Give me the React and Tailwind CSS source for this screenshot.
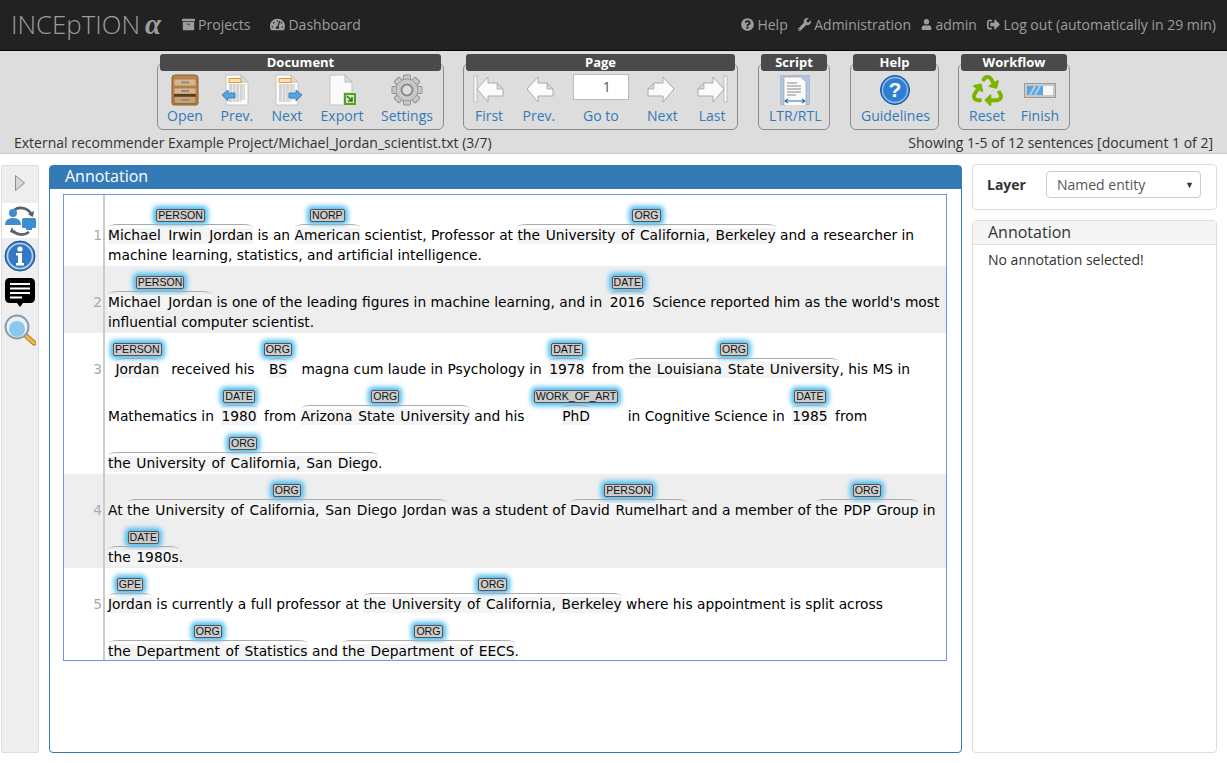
import { FaArchive, FaTachometerAlt, FaQuestionCircle, FaWrench, FaUser, FaSignOutAlt, FaRecycle } from "react-icons/fa";

const sentences = [
  {
    n: 1,
    lines: [
      [{ t: "Michael Irwin Jordan", l: "PERSON", wide: true }, " is an ", { t: "American", l: "NORP" }, " scientist, Professor at ", { t: "the University of California, Berkeley", l: "ORG" }, " and a researcher in"],
      ["machine learning, statistics, and artificial intelligence."],
    ],
  },
  {
    n: 2,
    lines: [
      [{ t: "Michael Jordan", l: "PERSON", wide: true }, " is one of the leading figures in machine learning, and in ", { t: "2016", l: "DATE" }, " Science reported him as the world's most"],
      ["influential computer scientist."],
    ],
  },
  {
    n: 3,
    lines: [
      [{ t: "Jordan", l: "PERSON" }, " received his ", { t: "BS", l: "ORG" }, " magna cum laude in Psychology in ", { t: "1978", l: "DATE" }, " from ", { t: "the Louisiana State University", l: "ORG" }, ", his MS in"],
      ["Mathematics in ", { t: "1980", l: "DATE" }, " from ", { t: "Arizona State University", l: "ORG" }, " and his ", { t: "PhD", l: "WORK_OF_ART" }, " in Cognitive Science in ", { t: "1985", l: "DATE" }, " from"],
      [{ t: "the University of California, San Diego", l: "ORG" }, "."],
    ],
  },
  {
    n: 4,
    lines: [
      ["At ", { t: "the University of California, San Diego Jordan", l: "ORG" }, " was a student of ", { t: "David Rumelhart", l: "PERSON" }, " and a member of ", { t: "the PDP Group", l: "ORG" }, " in"],
      [{ t: "the 1980s", l: "DATE" }, "."],
    ],
  },
  {
    n: 5,
    lines: [
      [{ t: "Jordan", l: "GPE" }, " is currently a full professor at ", { t: "the University of California, Berkeley", l: "ORG" }, " where his appointment is split across"],
      [{ t: "the Department of Statistics", l: "ORG" }, " and ", { t: "the Department of EECS", l: "ORG" }, "."],
    ],
  },
];

function Page({ children }) {
  return (
    <>
      <path d="M5 1h15l7 7v23H5z" fill="#fdfdfd" stroke="#c4c4c4" />
      <path d="M20 1v7h7z" fill="#ddd" stroke="#bbb" />
      {children}
    </>
  );
}

function DocLines() {
  return (
    <>
      <rect x="8" y="4.5" width="12" height="4" fill="#fbe3c0" stroke="#ef9a2b" />
      <path d="M8 11h16M8 13h16M8 15h16M8 17h16M8 19h16M8 21h16M8 23h16M8 25h16M8 27h12" stroke="#aaa" strokeDasharray="3 .6" />
    </>
  );
}

function BlueArrow({ dir }) {
  const d = dir === "left" ? "M1 21l6-5v3h7v5H7v3z" : "M31 21l-6-5v3h-7v5h7v3z";
  return <path d={d} fill="#5ba3dd" stroke="#2f77b5" strokeWidth=".8" />;
}

function OpenIcon() {
  return (
    <svg width="32" height="32" viewBox="0 0 32 32">
      <path d="M3 4q0-3 3-3h20q3 0 3 3v25q0 2-2 2H5q-2 0-2-2z" fill="#b98651" stroke="#8a5c2c" />
      <rect x="5" y="5" width="22" height="7" fill="#d6b48c" stroke="#9b7241" strokeWidth=".6" />
      <rect x="5" y="14" width="22" height="6" fill="#d6b48c" stroke="#9b7241" strokeWidth=".6" />
      <rect x="5" y="22.5" width="22" height="7" fill="#c9a073" stroke="#7b5426" strokeWidth=".6" />
      <rect x="5" y="20" width="22" height="2.5" fill="#5b3c18" />
      <rect x="12" y="7.5" width="8" height="2" fill="#8c8c8c" />
      <rect x="12" y="16" width="8" height="2" fill="#8c8c8c" />
      <rect x="12" y="25" width="8" height="2" fill="#8c8c8c" />
    </svg>
  );
}

function PrevDocIcon() {
  return (
    <svg width="32" height="32" viewBox="0 0 32 32">
      <Page><DocLines /></Page>
      <BlueArrow dir="left" />
    </svg>
  );
}

function NextDocIcon() {
  return (
    <svg width="32" height="32" viewBox="0 0 32 32">
      <Page><DocLines /></Page>
      <BlueArrow dir="right" />
    </svg>
  );
}

function ExportIcon() {
  return (
    <svg width="32" height="32" viewBox="0 0 32 32">
      <path d="M4 1h15l7 7v23H4z" fill="#fafafa" stroke="#c4c4c4" />
      <path d="M19 1v7h7z" fill="#ddd" stroke="#bbb" />
      <rect x="17.5" y="18.5" width="13" height="13" fill="#5c9b2e" stroke="#d8e8c8" />
      <rect x="20" y="21" width="8" height="8" fill="#d5e8bd" />
      <path d="M21 22l5 5m0-4v4h-4" stroke="#3a7a12" strokeWidth="1.6" fill="none" />
    </svg>
  );
}

function GearIcon() {
  const teeth = [0, 45, 90, 135, 180, 225, 270, 315];
  return (
    <svg width="32" height="32" viewBox="0 0 32 32">
      {teeth.map((a) => (
        <rect key={a} x="12.5" y="1" width="7" height="8" rx="1" fill="#c9c9c9" stroke="#8f8f8f" transform={`rotate(${a} 16 16)`} />
      ))}
      <circle cx="16" cy="16" r="11" fill="#c9c9c9" stroke="#9a9a9a" />
      <circle cx="16" cy="16" r="5.5" fill="#ddd" stroke="#8a8a8a" strokeWidth="2" />
    </svg>
  );
}

function PageArrow({ dir, bar }) {
  const flip = dir === "right" ? "scale(-1 1) translate(-32 0)" : undefined;
  return (
    <svg width="32" height="32" viewBox="0 0 32 32" className="-mt-[2px]">
      <g transform={flip}>
        {bar && <rect x="1" y="3" width="3" height="26" fill="#fafafa" stroke="#aaa" strokeWidth=".7" />}
        <path d="M4 16L15 4v6h9l6 6v7H15v6z" fill="#fbfbfb" stroke="#aaa" />
        <path d="M24 10v6h6z" fill="#d8d8d8" stroke="#999" strokeWidth=".6" />
      </g>
    </svg>
  );
}

function ScriptIcon() {
  return (
    <svg width="32" height="32" viewBox="0 0 32 32">
      <rect x="1.5" y="1.5" width="29" height="29" fill="#a9c9e6" stroke="#bbb" />
      <path d="M5 3h17l5 5v24H5z" fill="#fafafa" stroke="#999" strokeWidth=".6" />
      <path d="M8 9h10M8 12h14M8 15h14M8 18h14M8 21h9" stroke="#888" strokeWidth="1" />
      <path d="M6 27h20M9 25l-3 2 3 2M23 25l3 2-3 2" stroke="#2a6fb0" strokeWidth="1.1" fill="none" />
    </svg>
  );
}

function HelpIcon() {
  return (
    <svg width="32" height="32" viewBox="0 0 32 32">
      <circle cx="16" cy="16" r="14.5" fill="#2f7fd0" stroke="#15508f" />
      <circle cx="16" cy="16" r="12.5" fill="none" stroke="#8dbdec" strokeWidth="1.4" />
      <text x="16" y="23" textAnchor="middle" fontSize="21" fontWeight="700" fill="#fff" fontFamily="'Liberation Sans', sans-serif">?</text>
    </svg>
  );
}

function FinishIcon() {
  return (
    <svg width="32" height="32" viewBox="0 0 32 32">
      <rect x="0.5" y="9.5" width="31" height="14" fill="#c8c8c8" stroke="#9c9c9c" />
      <rect x="3" y="12" width="26" height="9" fill="#f6f6f6" />
      <rect x="3" y="12" width="16" height="9" fill="#5ba3dd" />
      <path d="M6 21l5-9M11 21l5-9" stroke="#a9d3f2" strokeWidth="2" />
    </svg>
  );
}

function SyncIcon() {
  return (
    <svg width="32" height="32" viewBox="0 0 32 32">
      <path d="M10 5a12 12 0 0 1 18 6" fill="none" stroke="#56616b" strokeWidth="2.6" />
      <path d="M24 9l5 3 1-6z" fill="#56616b" />
      <path d="M9 26a12 12 0 0 0 16 1" fill="none" stroke="#56616b" strokeWidth="2.6" />
      <path d="M11 29l-5-2 2-5z" fill="#56616b" />
      <circle cx="9" cy="8" r="4" fill="#3d8dd0" />
      <path d="M1 20q0-7 8-7t8 7z" fill="#3d8dd0" />
      <rect x="18" y="13" width="14" height="10" rx="1.5" fill="#3d8dd0" />
      <rect x="22" y="23" width="6" height="2" fill="#3d8dd0" />
    </svg>
  );
}

function InfoIcon() {
  return (
    <svg width="32" height="32" viewBox="0 0 32 32">
      <circle cx="16" cy="16" r="15" fill="#3579c4" stroke="#1b5796" />
      <circle cx="16" cy="16" r="12.5" fill="none" stroke="#b6d3f0" strokeWidth="1.6" />
      <circle cx="16" cy="9" r="2.6" fill="#fff" />
      <path d="M12 13h6v10h2v2.5h-8V23h2v-7.5h-2z" fill="#fff" />
    </svg>
  );
}

function CommentIcon() {
  return (
    <svg width="32" height="32" viewBox="0 0 32 32">
      <path d="M6 1h20q5 0 5 5v15q0 5-5 5h-7l-3 4-3-4H6q-5 0-5-5V6q0-5 5-5z" fill="#000" />
      <path d="M6 7h20M6 11.5h20M6 16h20M6 20.5h12" stroke="#fff" strokeWidth="2" />
    </svg>
  );
}

function SearchIcon() {
  return (
    <svg width="32" height="32" viewBox="0 0 32 32">
      <path d="M20 20l10 9" stroke="#8a6a2a" strokeWidth="5" strokeLinecap="round" />
      <path d="M21 21l9 8" stroke="#f4b63f" strokeWidth="3.4" strokeLinecap="round" />
      <circle cx="13" cy="13" r="11.5" fill="#e4f2fb" stroke="#8f9aa3" strokeWidth="2" />
      <circle cx="13" cy="15" r="8" fill="#8cc8ee" />
    </svg>
  );
}

function NavItem({ icon, children }) {
  return (
    <span className="flex items-center gap-[3px]">
      {icon}
      {children}
    </span>
  );
}

function ToolButton({ icon, label }) {
  return (
    <div className="flex flex-col items-center">
      <div className="flex h-[32px] items-center justify-center">{icon}</div>
      <span className="text-[14px] leading-[20px] text-[#337ab7]">{label}</span>
    </div>
  );
}

function ToolGroup({ title, className, pad = "px-[10px]", children }) {
  return (
    <div className={`flex flex-col ${className}`}>
      <div className="relative z-10 mx-[3px] h-[17px] rounded-[3px] bg-[#4a4a4a] text-center text-[13px] font-bold leading-[17px] text-white">{title}</div>
      <div className={`-mt-[8px] flex h-[67px] items-start justify-between rounded-[6px] border border-[#8c8c8c] pt-[10px] ${pad}`}>{children}</div>
    </div>
  );
}

function Annotated({ text, label, wide }) {
  return (
    <span className="flex flex-col items-center">
      <span className="mx-[5px] mb-[2px] block h-[13px] whitespace-nowrap rounded-[2px] border border-[#555] bg-[#ccc] px-px font-['Liberation_Sans',sans-serif] text-[10.6px] leading-[11px] text-[#111] shadow-[0_0_5px_3px_#4cbcf2]">
        {label}
      </span>
      <span className="block w-fit">
        <span className="relative block h-[4px] rounded-t-[10px_3px] border-t border-t-[#aaa]">
          <span className="absolute -top-[2px] left-1/2 block h-[2px] w-px bg-[#aaa]" />
        </span>
        <span className={wide ? "mb-[2px] block h-[16px] whitespace-pre bg-[#f4f4f4] leading-[14px] [word-spacing:3px]" : "mb-[2px] block h-[16px] whitespace-pre bg-[#f4f4f4] leading-[14px] [word-spacing:1.3px]"}>{text}</span>
      </span>
    </span>
  );
}

function Line({ segs }) {
  const annotated = segs.some((s) => typeof s !== "string");
  return (
    <div className={annotated ? "flex h-[47px] items-end" : "flex h-[20px] items-end"}>
      {segs.map((s, i) =>
        typeof s === "string" ? (
          <span key={i} className="h-[20px] whitespace-pre leading-[18px]">{s}</span>
        ) : (
          <Annotated key={i} text={s.t} label={s.l} wide={s.wide} />
        )
      )}
    </div>
  );
}

export default function App() {
  return (
    <div className="flex h-screen flex-col overflow-hidden bg-white font-['Open_Sans',sans-serif] text-[14px] text-[#333]">
      {/* Navbar */}
      <div className="flex h-[51px] items-center justify-between border-b border-[#080808] bg-[#222] pb-[2px] pl-[11px] pr-[11px] text-[#9d9d9d]">
        <div className="flex items-center">
          <span className="text-[25.8px] font-light leading-[48px]">INCEpTION</span>
          <span className="ml-[5px] font-['Liberation_Serif',serif] text-[29px] font-bold italic leading-[48px]">α</span>
          <div className="ml-[21px] flex items-center gap-[20px]">
            <NavItem icon={<FaArchive size={13} />}>Projects</NavItem>
            <NavItem icon={<FaTachometerAlt size={15} />}>Dashboard</NavItem>
          </div>
        </div>
        <div className="flex items-center gap-[10.5px]">
          <NavItem icon={<FaQuestionCircle size={13} />}>Help</NavItem>
          <NavItem icon={<FaWrench size={13} />}>Administration</NavItem>
          <NavItem icon={<FaUser size={11} />}>admin</NavItem>
          <NavItem icon={<FaSignOutAlt size={13} />}>Log out (automatically in 29 min)</NavItem>
        </div>
      </div>

      {/* Toolbar */}
      <div className="h-[103px] border-b border-[#ccc] bg-[#ddd] pt-[3px]">
        <div className="flex justify-center gap-[19px]">
          <ToolGroup title="Document" className="w-[287px]" pad="pl-[9px] pr-[10px]">
            <ToolButton icon={<OpenIcon />} label="Open" />
            <ToolButton icon={<PrevDocIcon />} label="Prev." />
            <ToolButton icon={<NextDocIcon />} label="Next" />
            <ToolButton icon={<ExportIcon />} label="Export" />
            <ToolButton icon={<GearIcon />} label="Settings" />
          </ToolGroup>
          <ToolGroup title="Page" className="w-[275px]" pad="px-[9px]">
            <ToolButton icon={<PageArrow dir="left" bar />} label="First" />
            <ToolButton icon={<PageArrow dir="left" />} label="Prev." />
            <ToolButton
              icon={<div className="h-[26px] w-[56px] self-start border border-[#bbb] bg-white pr-[17px] text-right leading-[24px] text-[#555]">1</div>}
              label="Go to"
            />
            <ToolButton icon={<PageArrow dir="right" />} label="Next" />
            <ToolButton icon={<PageArrow dir="right" bar />} label="Last" />
          </ToolGroup>
          <ToolGroup title="Script" className="mx-px w-[72px]">
            <ToolButton icon={<ScriptIcon />} label="LTR/RTL" />
          </ToolGroup>
          <ToolGroup title="Help" className="w-[89px]">
            <ToolButton icon={<HelpIcon />} label="Guidelines" />
          </ToolGroup>
          <ToolGroup title="Workflow" className="w-[112px]">
            <ToolButton icon={<FaRecycle size={31} color="#7db300" />} label="Reset" />
            <ToolButton icon={<FinishIcon />} label="Finish" />
          </ToolGroup>
        </div>
        <div className="mt-[3px] flex justify-between px-[14px] leading-[20px]">
          <span>External recommender Example Project/Michael_Jordan_scientist.txt (3/7)</span>
          <span>Showing 1-5 of 12 sentences [document 1 of 2]</span>
        </div>
      </div>

      {/* Main area */}
      <div className="flex min-h-0 flex-1 pb-[10px] pl-px pr-[10px] pt-[11px]">
        {/* Side actions */}
        <div className="flex w-[38px] shrink-0 flex-col items-center rounded-[2px] border border-[#ddd] bg-[#eee]">
          <div className="flex h-[37px] items-center justify-center pb-[3px]">
            <svg width="12" height="18" viewBox="0 0 12 18">
              <path d="M1.5 1.5v15L10.5 9z" fill="#d8d8d8" stroke="#8e8e8e" />
            </svg>
          </div>
          <div className="flex h-[35px] w-full items-center justify-center bg-white"><SyncIcon /></div>
          <div className="flex h-[35px] items-center justify-center"><InfoIcon /></div>
          <div className="flex h-[39px] items-center justify-center pt-px"><CommentIcon /></div>
          <div className="flex h-[35px] items-center justify-center"><SearchIcon /></div>
        </div>

        {/* Annotation editor */}
        <div className="ml-[10px] flex w-[913px] shrink-0 flex-col rounded-[4px] border border-[#337ab7]">
          <div className="h-[23px] bg-[#337ab7] pl-[15px] text-[16px] leading-[20px] text-white">Annotation</div>
          <div className="ml-[13px] mr-[14px] mt-[5px] h-[467px] overflow-hidden border border-[#6d94ee] font-['DejaVu_Sans',sans-serif] text-[13.8px] text-black">
            {sentences.map((s, i) => (
              <div key={s.n} className={i % 2 === 0 ? "flex bg-white" : "flex bg-[#eee]"}>
                <div className={i === 0 ? "relative w-[41px] shrink-0 border-r-2 border-[#ccc] pt-[4px]" : "relative w-[41px] shrink-0 border-r-2 border-[#ccc]"}>
                  <div className="mt-[27px] pr-px text-right leading-[18px] text-[#aaa]">{s.n}</div>
                </div>
                <div className={i === 0 ? "pl-[3px] pt-[4px]" : "pl-[3px]"}>
                  {s.lines.map((segs, j) => (
                    <Line key={j} segs={segs} />
                  ))}
                </div>
              </div>
            ))}
          </div>
        </div>

        {/* Right sidebar */}
        <div className="ml-[10px] flex w-[245px] shrink-0 flex-col">
          <div className="-mt-px flex h-[46px] items-start rounded-[4px] border border-[#ddd] pl-[14px] pr-[15px] pt-[6px]">
            <span className="font-bold leading-[27px]">Layer</span>
            <div className="ml-[20px] flex h-[27px] flex-1 items-center justify-between rounded-[4px] border border-[#ccc] bg-white pl-[10px] pr-[6px] text-[#555]">
              <span>Named entity</span>
              <span className="text-[9px] text-[#333]">▼</span>
            </div>
          </div>
          <div className="mt-[10px] flex flex-1 flex-col rounded-[4px] border border-[#ddd]">
            <div className="h-[24px] border-b border-[#ddd] bg-[#f5f5f5] pl-[15px] text-[16px] leading-[22px]">Annotation</div>
            <div className="pl-[15px] pt-[5px] leading-[20px]">No annotation selected!</div>
          </div>
        </div>
      </div>
    </div>
  );
}
